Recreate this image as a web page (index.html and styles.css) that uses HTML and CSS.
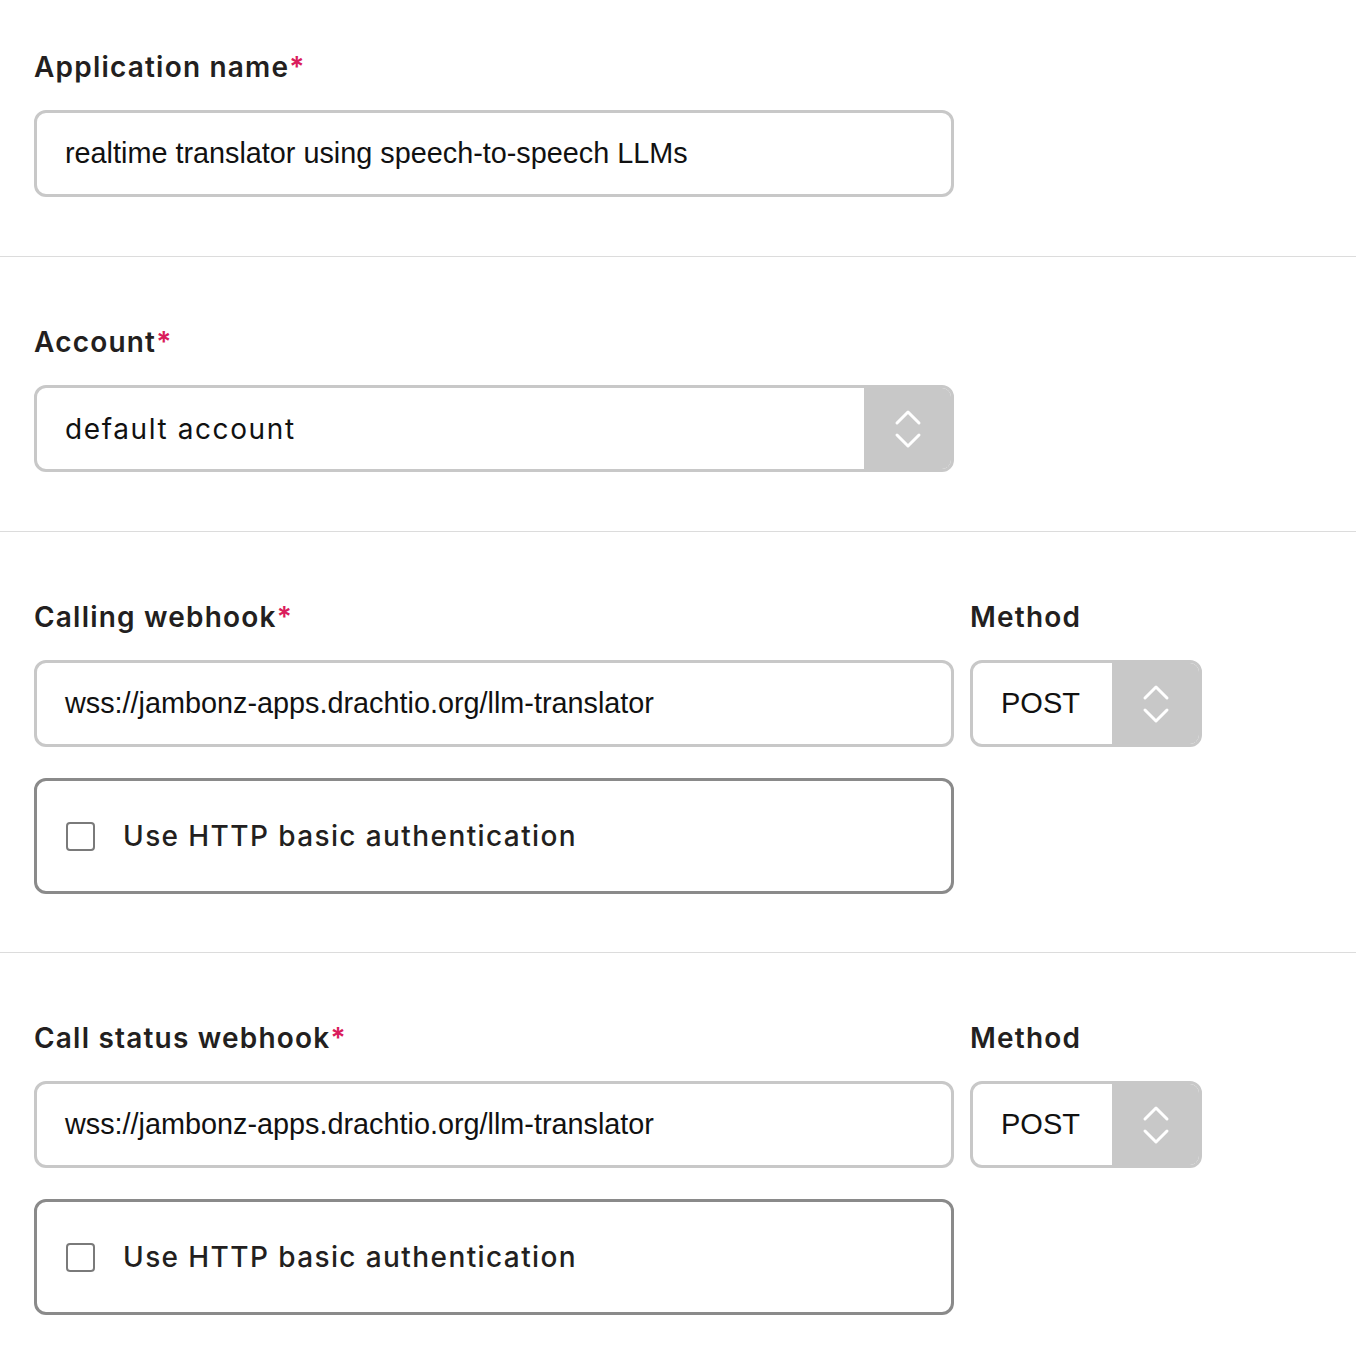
FILE: index.html
```html
<!DOCTYPE html>
<html>
<head>
<meta charset="utf-8">
<link rel="stylesheet" href="styles.css">
</head>
<body>
<div class="form">
  <section class="section first">
    <label class="label">Application name<span class="req">*</span></label>
    <div class="input"><span class="value">realtime translator using speech-to-speech LLMs</span></div>
  </section>
  <section class="section">
    <label class="label">Account<span class="req">*</span></label>
    <div class="select wide">
      <span class="sel-value alt">default account</span>
      <span class="arrow">
        <svg width="28" height="42" viewBox="0 0 28 42"><path d="M3 15 L14 4 L25 15 M3 27 L14 38 L25 27" fill="none" stroke="#fff" stroke-width="3" stroke-linecap="round" stroke-linejoin="round"/></svg>
      </span>
    </div>
  </section>
  <section class="section webhook">
    <div class="row">
      <div class="col-main">
        <label class="label">Calling webhook<span class="req">*</span></label>
        <div class="input"><span class="value">wss://jambonz-apps.drachtio.org/llm-translator</span></div>
        <div class="auth"><span class="checkbox"></span><span class="auth-text">Use HTTP basic authentication</span></div>
      </div>
      <div class="col-method">
        <label class="label">Method</label>
        <div class="select method">
          <span class="sel-value">POST</span>
          <span class="arrow">
            <svg width="28" height="42" viewBox="0 0 28 42"><path d="M3 15 L14 4 L25 15 M3 27 L14 38 L25 27" fill="none" stroke="#fff" stroke-width="3" stroke-linecap="round" stroke-linejoin="round"/></svg>
          </span>
        </div>
      </div>
    </div>
  </section>
  <section class="section webhook">
    <div class="row">
      <div class="col-main">
        <label class="label">Call status webhook<span class="req">*</span></label>
        <div class="input"><span class="value">wss://jambonz-apps.drachtio.org/llm-translator</span></div>
        <div class="auth"><span class="checkbox"></span><span class="auth-text">Use HTTP basic authentication</span></div>
      </div>
      <div class="col-method">
        <label class="label">Method</label>
        <div class="select method">
          <span class="sel-value">POST</span>
          <span class="arrow">
            <svg width="28" height="42" viewBox="0 0 28 42"><path d="M3 15 L14 4 L25 15 M3 27 L14 38 L25 27" fill="none" stroke="#fff" stroke-width="3" stroke-linecap="round" stroke-linejoin="round"/></svg>
          </span>
        </div>
      </div>
    </div>
  </section>
</div>
</body>
</html>
```

FILE: styles.css
```css
* { box-sizing: border-box; }
html, body { margin: 0; padding: 0; background: #fff; }
body { font-family: "Inter", "Lato", sans-serif; color: #231f20; }

.section {
  padding: 67px 34px 59px;
  border-bottom: 1px solid #dcdcdc;
}
.section.first { padding-top: 49px; }
.section.webhook { padding-bottom: 58px; }
.section:last-child { border-bottom: none; }

.label {
  display: block;
  height: 36px;
  line-height: 36px;
  font-size: 28px;
  font-weight: 600;
  letter-spacing: 1.2px;
  color: #231f20;
  margin-bottom: 25px;
}
.req { color: #da1c5c; letter-spacing: 0; }

.input {
  width: 920px;
  height: 87px;
  border: 3px solid #c8c8c8;
  border-radius: 12px;
  display: flex;
  align-items: center;
  padding-left: 28px;
}
.value {
  font-family: "Liberation Sans", Arial, sans-serif;
  font-size: 28.8px;
  color: #111;
}

.select {
  height: 87px;
  border: 3px solid #c8c8c8;
  border-radius: 12px;
  display: flex;
  align-items: stretch;
  overflow: hidden;
}
.select.wide { width: 920px; }
.select.method { width: 232px; }
.sel-value {
  flex: 1;
  display: flex;
  align-items: center;
  padding-left: 28px;
  font-family: "Liberation Sans", Arial, sans-serif;
  font-size: 29px;
  color: #111;
}
.sel-value.alt {
  font-family: "Inter", "Lato", sans-serif;
  font-size: 28px;
  font-weight: 400;
  letter-spacing: 1.6px;
}
.arrow {
  width: 87px;
  background: #c8c8c8;
  display: flex;
  align-items: center;
  justify-content: center;
}

.row { display: flex; gap: 16px; }
.col-main { width: 920px; }
.col-method { width: 232px; }

.auth {
  margin-top: 31px;
  width: 920px;
  height: 116px;
  border: 3px solid #8a8a8a;
  border-radius: 12px;
  display: flex;
  align-items: center;
  padding-left: 29px;
}
.checkbox {
  width: 29px;
  height: 29px;
  border: 2px solid #7a7a7a;
  border-radius: 4px;
  margin-right: 28px;
  flex: none;
}
.auth-text {
  font-size: 28px;
  font-weight: 500;
  letter-spacing: 1.4px;
  color: #231f20;
}
```
